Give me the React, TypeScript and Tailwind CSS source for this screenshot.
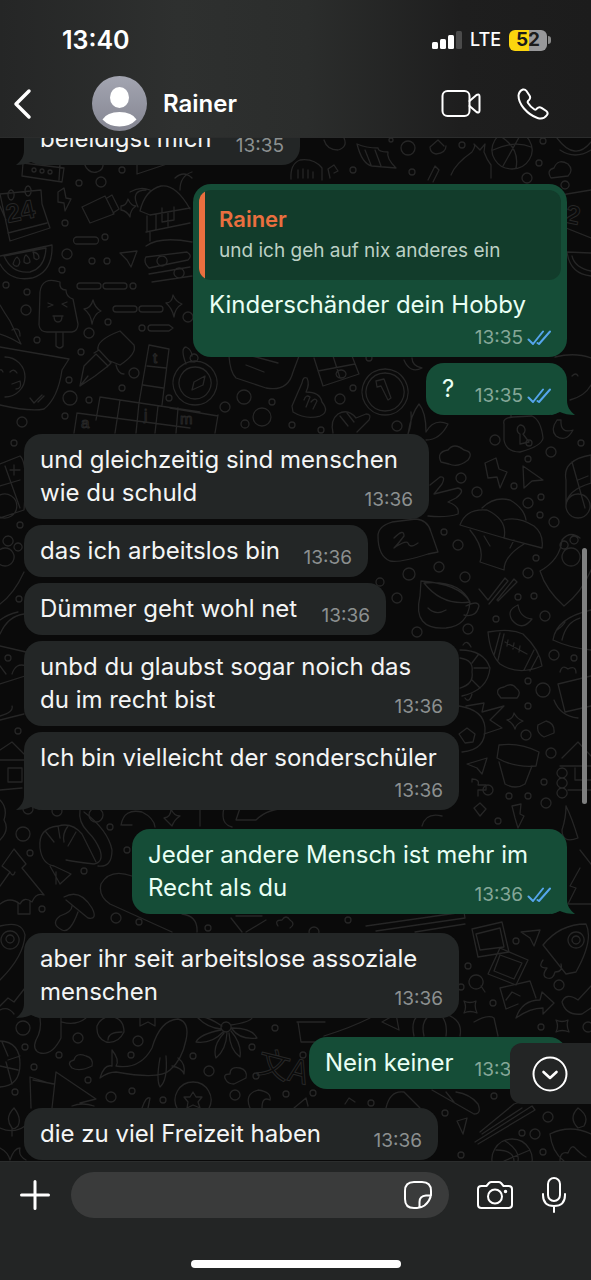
import { ReactNode } from "react";
import clsx from "clsx";

type Message = {
    text: string
    time: string
    mine?: boolean
    tail?: boolean
    stacked?: boolean
    quote?: { name: string, text: string }
    width: string
    gap: string
}

const messages: Message[] = [
    { text: "beleidigst mich", time: "13:35", tail: true, width: "w-[276px]", gap: "" },
    { text: "Kinderschänder dein Hobby", time: "13:35", mine: true, stacked: true, quote: { name: "Rainer", text: "und ich geh auf nix anderes ein" }, width: "w-[374px]", gap: "mt-[19px]" },
    { text: "?", time: "13:35", mine: true, tail: true, width: "w-[141px]", gap: "mt-[6px]" },
    { text: "und gleichzeitig sind menschen wie du schuld", time: "13:36", width: "w-[405px]", gap: "mt-[19px]" },
    { text: "das ich arbeitslos bin", time: "13:36", width: "w-[344px]", gap: "mt-[6px]" },
    { text: "Dümmer geht wohl net", time: "13:36", width: "w-[362px]", gap: "mt-[6px]" },
    { text: "unbd du glaubst sogar noich das du im recht bist", time: "13:36", width: "w-[435px]", gap: "mt-[6px]" },
    { text: "Ich bin vielleicht der sonderschüler", time: "13:36", tail: true, stacked: true, width: "w-[435px]", gap: "mt-[6px]" },
    { text: "Jeder andere Mensch ist mehr im Recht als du", time: "13:36", mine: true, tail: true, width: "w-[435px]", gap: "mt-[19px]" },
    { text: "aber ihr seit arbeitslose assoziale menschen", time: "13:36", tail: true, width: "w-[435px]", gap: "mt-[19px]" },
    { text: "Nein keiner", time: "13:36", mine: true, tail: true, width: "w-[258px]", gap: "mt-[19px]" },
    { text: "die zu viel Freizeit haben", time: "13:36", width: "w-[414px]", gap: "mt-[19px]" },
]

// x, y, r
const dots = [
    [79, 183, 3], [101, 182, 5], [122, 170, 3], [65, 223, 3], [67, 254, 5], [62, 270, 3], [105, 237, 3], [92, 261, 3], [107, 261, 3],
    [133, 286, 3], [6, 285, 3], [27, 292, 3], [26, 310, 5], [37, 340, 3], [89, 333, 5], [108, 322, 3], [81, 352, 3], [69, 380, 3],
    [70, 398, 7], [89, 400, 3], [65, 416, 3], [134, 373, 5], [122, 388, 3], [169, 398, 3], [142, 328, 3], [22, 422, 5], [14, 443, 3],
    [20, 525, 3], [19, 599, 3], [8, 658, 3], [18, 731, 3], [188, 317, 5], [225, 407, 5], [244, 397, 7], [272, 402, 3], [245, 424, 4],
    [262, 417, 9], [292, 425, 3], [321, 430, 3], [340, 399, 5], [353, 388, 3], [397, 426, 5], [369, 358, 3], [408, 148, 7], [391, 140, 2],
    [462, 145, 3], [527, 178, 5], [539, 163, 3], [543, 141, 3], [353, 170, 3], [412, 172, 3], [495, 440, 5], [529, 443, 3],
    [528, 459, 3], [551, 452, 5], [581, 443, 3], [461, 478, 5], [477, 492, 5], [514, 486, 3], [541, 497, 3], [540, 515, 3], [528, 503, 5],
    [554, 522, 5], [458, 545, 5], [444, 532, 3], [409, 574, 6], [439, 567, 5], [465, 577, 5], [397, 598, 5], [380, 582, 4], [536, 558, 3],
    [528, 573, 5], [518, 597, 3], [534, 596, 3], [545, 616, 5], [496, 619, 3], [468, 629, 5], [417, 632, 5], [554, 655, 5], [574, 658, 3],
    [528, 681, 3], [543, 690, 7], [528, 706, 3], [526, 735, 5], [551, 753, 5], [544, 782, 3], [488, 790, 5], [509, 796, 3], [528, 796, 3],
    [546, 803, 5], [498, 821, 3], [28, 809, 5], [57, 811, 5], [96, 815, 7], [110, 827, 3], [23, 834, 7], [30, 853, 3],
    [84, 871, 3], [42, 909, 3], [116, 918, 5], [139, 922, 3], [127, 850, 3], [208, 928, 3], [314, 932, 5], [348, 920, 3], [516, 941, 3],
    [468, 966, 3], [559, 985, 5], [493, 1003, 3], [461, 987, 3], [541, 1027, 3], [588, 1027, 5], [23, 1028, 7], [25, 1047, 3], [34, 1067, 3],
    [78, 1038, 5], [59, 1055, 3], [138, 1041, 5], [131, 1055, 3], [88, 1080, 3], [111, 1097, 5], [132, 1091, 3], [163, 1100, 3], [193, 1056, 3],
    [209, 1071, 5], [252, 1047, 3], [256, 1076, 3], [235, 1095, 5], [275, 1028, 3], [286, 1094, 3], [303, 1055, 3], [15, 1092, 3],
    [313, 1093, 3], [371, 1103, 3], [445, 1113, 3], [548, 1117, 5], [535, 1134, 5], [522, 1133, 3], [461, 1155, 3], [543, 1152, 3], [494, 1096, 3],
]

const doodles = [
    // row under the header
    "M23 163 L64 168 L62 182 L22 176 Z M60 164 L59 180", "M84 163 Q88 174 97 172 Q104 170 103 163 M137 163 V174 L170 163",
    "M324 140 Q327 150 338 150 Q348 147 344 138", "M357 144 Q362 164 372 166 L396 168 Q386 158 388 152 Q378 152 378 148 Q366 148 357 144 M365 150 L371 165 M375 150 L381 166",
    "M430 147 Q430 153 436 154 Q446 153 446 146 M430 147 L438 140 L444 146", "M451 175 Q455 164 472 152 Q476 146 474 144 L480 150 L485 144 L484 152 Q487 160 491 165 L491 178",
    "M512 131 a20 19 0 1 0 .1 0 M500 136 Q520 148 516 168 M493 150 Q515 140 531 147 M522 132 L503 166", "M557 138 Q575 162 591 142 M560 150 Q575 160 591 150",
    "M551 178 Q546 170 554 168 Q558 158 568 164 Q574 170 568 176 Z", "M291 179 Q290 164 300 160 Q314 158 322 168 V180 M298 178 v-8 M303 178 v-9 M308 178 v-8 M313 178 v-6",
    "M330 178 l-2 -9 l6 -4 l4 6 l-4 2 M428 180 l7 -14 l4 4 l-6 12",
    // calendar
    "M0 194 L41 190 L42 204 L50 228 L10 241 Z M8 233 L47 223 M0 206 L6 220 M11 190 a3 5 0 1 0 .1 0 M28 186 a3 5 0 1 0 .1 0",
    "M555 196 L591 190 M561 191 V226 L591 238 M565 181 a4 4 0 1 0 .1 0", "M58 192 L64 188 L66 198 L71 199 L65 211 L64 203 L58 202 Z",
    "M82 207 L105 196 L114 214 L90 223 Z M107 198 L112 195 L119 209 L113 213", "M121 206 Q126 206 128 199 Q131 206 136 206 Q130 210 130 217 Q127 211 121 210 Z",
    // beach hut
    "M140 211 Q145 190 161 186 Q176 184 190 209 M140 211 L150 215 L190 208 M147 216 V232 M156 214 V230 M168 212 V226 M146 232 L190 223 M150 241 V232 M146 246 Q160 236 192 242 M162 208 v14 l12 -2 v-13 M138 207 Q130 190 146 190 M130 192 Q140 186 150 190 M175 178 Q184 170 192 178 M180 190 Q180 176 192 172",
    "M77 237 h18 a3 3 0 0 1 0 7 h-18 a3 3 0 0 1 0 -7", "M0 256 L52 245 Q53 272 32 278 Q10 282 0 264 M4 256 L46 248 Q45 268 30 272 Q12 274 4 256 M13 264 q2 -6 4 -7 q5 4 1 9 q-3 1 -5 -2 M24 262 q0 -6 2 -7 q4 3 4 7 q-3 3 -6 0 M34 258 q0 -4 -1 -6 q6 1 6 6 q-2 3 -5 0",
    "M591 253 L567 252 Q570 274 591 276 M572 256 Q575 268 591 271", "M120 253 L137 251 L131 267 L127 260 Z",
    "M146 257 L187 252 Q193 256 188 260 L149 268 Q143 262 146 257 M149 274 L190 267 M152 282 L192 276 M162 256 a5 5 0 1 0 .1 0 M179 268 a5 5 0 1 0 .1 0",
    "M80 283 h18 a3 3 0 0 1 0 6 h-18 a3 3 0 0 1 0 -6 M106 283 h18 a3 3 0 0 1 0 6 h-18 a3 3 0 0 1 0 -6 M116 306 h18 a3 3 0 0 1 0 6 h-18 a3 3 0 0 1 0 -6 M142 306 h18 a3 3 0 0 1 0 6 h-18 a3 3 0 0 1 0 -6 M151 325 h18 l4 3 l-4 3 h-18 a3 3 0 0 1 0 -6",
    // ice cream
    "M39 325 L40 292 Q42 276 60 282 Q59 290 66 290 Q66 297 73 299 L78 324 Q78 331 72 332 L47 332 Q40 332 39 325 M56 332 V346 q4 4 7 0 V332 M48 303 l5 2 l-5 2 M67 302 l-5 2 l5 3 M53 316 h10 M54 316 q0 6 4 6 q4 0 4 -6",
    "M84 309 Q91 308 93 300 Q95 308 101 311 Q94 314 92 324 Q91 314 84 309 M166 303 Q172 303 173 295 Q176 302 182 304 Q175 308 174 317 Q172 308 166 303",
    "M0 305 Q4 312 10 321 Q18 338 21 344 Q10 337 0 334 M12 330 q8 -4 8 6",
    // pen
    "M80 386 L84 366 L96 354 L108 366 L95 376 Z M94 353 L99 350 L111 363 L107 367 M98 350 Q96 340 120 331 L134 345 Q137 354 120 365 L110 361 M116 365 Q118 374 124 374 M80 386 L88 376",
    "M0 347 L69 359 L62 370 Q58 398 44 409 Q30 412 0 405 M5 357 a20 20 0 1 1 0 40 M10 372 q4 -4 7 1 M3 372 q-2 -4 -4 -1 M12 384 l8 -3 q2 8 -4 8 M30 398 l4 5 l8 -8 M38 402 l6 -6",
    // crossword
    "M149 345 L169 349 L162 405 M149 345 L139 403 M147 366 L166 368 M143 385 L163 388 M100 397 L200 412 M96 420 L100 397 M77 413 L190 428 M77 413 L74 433 M120 400 L115 433 M139 403 L136 433 M158 406 L155 433 M178 408 L176 433 M218 415 L215 433 M170 408 L218 416",
    // compass
    "M195 361 a22 22 0 1 0 .1 0 M195 367 a16 16 0 1 0 .1 0 M194 354 a4 4 0 1 0 .1 0 M192 390 l2 -8 l11 -6 l-2 9 Z M186 364 Q180 348 186 347 Q192 350 192 356",
    "M229 356 Q230 372 236 378 L266 388 Q288 392 293 372 L299 356 M246 365 L264 372 M252 356 L278 363", "M292 406 Q298 392 302 383 Q303 376 307 378 Q310 384 306 392 Q320 392 322 402 Q330 412 320 416 Q306 420 293 412 Z M304 400 q2 -6 6 -3 l-4 10 M311 402 q4 -5 6 -1 l-4 8",
    "M314 358 L323 386 L359 374 L352 356 M318 371 L355 364 M333 356 L340 378 M341 370 a5 4 0 1 0 .1 0", "M385 369 a23 23 0 1 0 .1 0 M385 373 a19 19 0 1 0 .1 0 M376 381 L384 379 L391 398 L388 400 L381 386 L377 387 Z",
    "M333 433 Q330 420 338 414 Q348 408 356 418 L366 414 Q372 414 369 420 L357 432 M340 416 l8 10 M347 413 l7 9", "M408 434 Q411 414 419 404 Q426 412 426 432 M426 432 Q434 418 448 424 Q440 440 426 440 M408 434 Q412 425 411 412 M404 360 Q410 374 422 368 Q412 366 412 358",
    // right column
    "M555 357 Q575 352 591 358 M570 400 Q585 396 591 385 M572 376 q4 -4 6 0", "M504 424 Q502 418 513 417 L532 416 Q541 420 543 438 Q542 446 520 452 Q506 452 504 440 Z M511 416 v-8 M518 414 v-8 M525 414 v-6 M520 425 a5 5 0 0 1 3 9 l6 8 l-9 2 v-10 a5 5 0 0 1 0 -9",
    "M557 420 Q550 430 556 436 Q566 443 573 430 Q560 434 561 420 Z", "M441 462 Q436 452 448 450 Q454 442 464 450 Q474 452 468 460 Q458 468 449 464 Z", "M485 463 L496 458 L499 469 L507 472 L500 488 L497 477 L488 478 Z M523 466 L543 480 L532 481 L524 488 Z",
    "M430 485 L440 477 Q446 476 442 484 L434 494 L458 488 Q466 490 456 498 L448 502 Q460 506 458 514 Q446 518 428 516",
    "M460 525 Q466 508 487 510 Q508 520 504 538 Z M482 508 Q494 496 510 500 Q524 508 526 520 M504 520 Q518 516 534 526 Q544 534 542 548 L504 538 M470 530 Q485 548 480 562 L504 570 Q504 556 524 544 M484 536 l6 10 M514 540 l-4 8",
    "M378 536 Q378 526 392 522 L416 519 Q428 520 431 532 L438 552 L428 554 Q400 563 390 561 Q378 556 378 536 M394 538 q10 -10 10 -2 q-6 8 -10 12 q12 -8 14 -5 q2 6 10 0",
    "M479 589 L488 600 L505 578 L508 581 L489 604 M497 600 L514 579 L517 582 L498 601", "M421 581 Q460 584 470 602 Q468 626 446 628 Q412 630 420 596 Z M424 583 Q442 606 470 602 Q460 580 424 583 M466 606 Q478 600 479 606 Q476 618 464 615 M428 608 q8 8 18 2",
    "M518 605 Q506 610 512 620 Q522 632 532 619 Q520 618 518 605", "M488 632 Q510 628 523 634 Q540 650 542 666 Q518 676 500 664 Q490 654 488 632 M500 633 L494 655 M504 634 L498 660 M534 650 L524 670 M538 656 L530 671 M505 642 l22 12 M508 640 l-1 6 M514 643 l-1 6 M520 646 l-1 6",
    "M460 650 Q484 650 490 668 Q488 690 462 696 M460 658 Q474 660 472 672 Q474 684 460 688 M478 655 l-6 8 M488 668 h-14 M480 688 l-8 -8 M463 645 q4 -6 8 2 M465 698 q4 6 7 -4",
    "M498 694 Q496 688 504 687 Q512 682 516 688 Q522 692 517 698 H501 Z", "M459 706 Q484 710 485 728 Q486 750 462 752 M466 706 L484 703 L482 712 L504 706 L490 720 L502 728 L484 734 M459 734 l8 -6 l8 6 l-2 8 l-8 1 Z",
    "M507 720 Q513 719 514 713 Q517 719 523 721 Q516 724 515 729 Q513 723 507 720 M538 725 l8 -4 q9 2 8 12 l-10 4 q-8 -4 -6 -12",
    "M499 745 Q520 742 539 752 L536 766 Q515 768 497 758 Z M499 762 L505 784 Q516 790 525 784 L532 766", "M467 764 L487 758 L482 774 L477 768 Z M472 782 v-3 q8 0 6 6 l8 0 v5 l-8 0 v6",
    "M566 505 Q567 490 591 483 V455 Q562 460 566 480 Z M572 462 L585 508 M578 494 a12 12 0 1 0 .1 0 M578 480 l10 -4", "M540 571 Q560 560 562 540 Q570 530 580 538 M540 571 Q546 590 564 606 Q582 592 591 570 M571 548 a9 9 0 1 0 .1 0 M564 541 a4 4 0 1 0 .1 0 M574 536 a4 4 0 1 0 .1 0",
    "M553 640 Q556 618 591 610 M553 640 Q570 648 591 650 M562 640 Q566 622 580 618 M557 630 q6 -4 8 -8", "M558 684 L591 676 M558 684 L565 712 L591 706 M554 700 Q560 716 578 718 M560 672 q2 -8 8 -3 q8 -4 8 4",
    "M562 758 L578 742 L591 756 M560 766 H591 M575 768 V780 H591 M562 768 a5 5 0 1 0 .1 0 M562 778 a5 5 0 1 0 .1 0 M562 788 a5 5 0 1 0 .1 0 M568 790 H591",
    // left margin
    "M0 464 L20 456 Q28 462 24 510 L0 518 M5 466 L20 508 M0 495 a12 12 0 1 1 0 22 M10 470 h10 M14 465 v10 M0 486 L20 480", "M8 536 a5 5 0 1 0 .1 0 M18 543 a4 4 0 1 0 .1 0 M5 548 a9 9 0 1 0 .1 0 M24 572 Q14 594 0 604",
    "M0 646 L26 652 M0 634 Q8 616 24 614 M0 620 q8 -6 18 -8 M0 666 l6 8 M12 674 q4 -12 14 -8 M0 684 L25 676 M0 716 Q14 712 12 706 M0 720 L24 714 M0 750 L12 742 L24 754 M0 760 H25 M8 768 h14 v14 h-14 Z M0 790 L22 788 M0 800 q8 8 4 20 q6 10 -4 20",
    // shrimp, tree, mushroom
    "M80 810 Q78 822 88 832 Q96 840 100 850 Q104 862 94 864 Q76 862 66 860 M84 812 Q108 830 112 850 Q112 868 98 866", "M40 848 Q38 828 58 826 Q72 822 82 834 L96 862 M40 848 Q42 864 54 866 L71 874 L60 884 L50 866 M46 832 l8 10 M58 826 l2 12 M68 826 q-6 8 -4 16 M76 832 l-8 14 M56 872 v12",
    "M0 886 L10 872 L2 866 L14 849 L26 864 L22 868 L40 890 L44 895 Q36 892 32 902 Q24 896 20 904 Q10 896 0 904 M18 903 V914 H30 V901 M10 872 q3 6 5 0",
    "M64 897 Q80 888 92 908 Q98 920 88 918 L66 900 M72 906 Q72 912 60 916 Q50 924 62 930 Q70 934 78 912", "M121 825 Q124 808 142 812 Q154 818 155 827 M122 825 H132 M164 818 Q171 817 171 809 Q174 816 180 816 Q174 820 172 826 Z",
    "M132 876 Q110 868 101 884 Q98 896 110 904 L172 932 M197 932 Q198 916 182 914 M240 808 l-4 12 h20 M256 820 Q268 808 290 808 M200 810 V826 M224 808 Q220 824 232 827",
    "M0 980 Q24 956 25 935 Q22 920 0 926 M10 931 a9 9 0 1 0 .1 0 M10 935 a4 4 0 1 0 .1 0 M0 1006 l8 -8 l6 4 l11 -14 M0 1010 Q8 1006 14 1014", "M231 918 L242 932 M246 932 L266 920 M236 916 L262 916 M278 926 q-4 -6 4 -6 q4 -6 8 0 q6 4 0 8",
    "M366 926 L464 912 L465 918 L376 931 M415 932 l50 -8", "M472 929 L502 922 L509 952 L478 957 Z M476 934 L500 928 L504 947 L480 950 Z M500 948 L528 960 L516 985 L488 974 Z M500 955 L522 963 L514 979 L494 971 Z",
    "M521 932 L540 930 L534 946 L530 938 Z M543 945 Q560 924 586 924 Q594 940 576 972 L566 974 Z M576 932 a8 8 0 1 0 .1 0 M576 936 a4 4 0 1 0 .1 0 M543 960 q-6 8 4 8 q-6 8 0 10 q6 2 8 -6 q8 0 6 -8",
    "M476 975 a7 7 0 1 0 .1 0 M481 986 l4 6 M500 988 L530 981 L536 998 M500 988 L506 1009 L518 1004 M506 1000 l6 -8 l8 4 M516 1018 Q522 1000 540 1000 L542 992 L554 1003 L543 1014 V1008 Q530 1008 516 1018",
    "M464 1001 Q470 1004 476 1001 Q474 1007 477 1013 Q470 1010 464 1013 Q467 1007 464 1001 M556 1020 Q562 1023 568 1020 Q566 1026 569 1032 Q562 1029 556 1032 Q559 1026 556 1020", "M562 1002 Q566 992 578 1000 L591 986 M562 1002 Q566 1016 582 1014 L591 1008",
    // bottom
    "M414 1036 Q408 1010 436 1012 Q464 1016 460 1036 M424 1036 Q420 1020 432 1014 M446 1036 Q448 1022 440 1014 M474 1022 Q488 1014 494 1018 L498 1036 M382 1022 l14 -8 l3 16 Z M297 1022 h28 M298 1022 l3 20 h14 M324 1036 Q350 1028 370 1018",
    "M40 1018 Q42 1030 36 1040 Q32 1050 40 1053 Q52 1056 61 1038 V1018 M62 1022 q14 4 24 -4", "M97 1026 Q100 1018 110 1016 Q124 1018 124 1032 Q118 1044 106 1042 Q96 1038 97 1026 M108 1040 q0 -8 14 -8 M140 1014 v12 l8 -4 l7 4 v-10",
    "M100 1078 Q104 1064 112 1066 L112 1050 Q120 1060 116 1066 Q140 1070 152 1048 Q160 1020 178 1019 Q190 1022 186 1040 Q182 1060 170 1070 Q160 1080 116 1072 Q108 1072 100 1078 M160 1058 Q156 1080 160 1087 Q168 1080 166 1056 M172 1066 Q182 1068 184 1074 Q186 1064 178 1058",
    "M226 1022 a5 5 0 1 0 .1 0 M222 1026 Q204 1014 198 1018 Q208 1028 221 1029 M221 1030 Q200 1034 196 1042 Q212 1044 223 1032 M224 1033 Q212 1046 216 1058 Q226 1050 227 1033 M229 1033 Q230 1050 240 1057 Q242 1044 231 1031 M232 1029 Q240 1040 257 1038 Q252 1028 232 1028 M231 1025 Q250 1022 252 1018",
    "M72 1068 Q66 1062 74 1060 Q76 1052 86 1056 Q94 1058 92 1066 Q80 1072 72 1068 M226 1080 Q222 1074 230 1074 Q230 1066 240 1068 Q248 1070 246 1078 Q238 1082 234 1084 Q228 1084 226 1080", "M31 1108 L30 1077 L52 1084 M52 1108 L56 1072 L96 1099 L80 1103 M33 1080 L54 1084 M72 1106 q10 -4 22 0",
    "M0 1041 Q20 1042 20 1064 Q20 1086 0 1087 M8 1060 L20 1056 M8 1056 L2 1042 M6 1062 L12 1084 M0 1066 L18 1070", "M193 1082 a18 18 0 1 0 .1 0 M193 1092 l3 5 l6 0 l-4 5 l2 6 l-7 -3 l-6 3 l1 -6 l-4 -5 h6 Z",
    "M250 1108 Q244 1094 258 1090 Q272 1092 270 1100 q-8 -4 -8 8 M142 1108 Q146 1096 150 1098 L148 1108", "M12 1128 Q4 1118 14 1108 Q22 1118 18 1126 Q14 1130 12 1128 M12 1128 v8 M0 1128 Q14 1134 25 1126 M0 1148 q8 4 10 12 q4 -12 10 -12 q-2 8 6 12",
    "M386 1108 Q390 1090 404 1092 L420 1108 M432 1090 L474 1114 Q482 1114 478 1104 Q470 1094 456 1092 M446 1092 L454 1102 M294 1108 l12 -10 l2 8 M345 1104 l4 -6 l6 4", "M480 1132 L514 1104 L520 1102 M482 1134 L522 1108 M475 1142 L532 1106 L535 1110 L478 1144 M457 1121 L467 1118 L463 1134 Z",
    "M512 1139 a20 20 0 1 0 .1 0 M496 1150 Q514 1150 514 1161 M505 1141 Q520 1150 518 1161 M530 1150 L504 1161", "M550 1134 Q570 1124 591 1134 M550 1134 Q552 1152 564 1161 M578 1128 Q568 1118 578 1108 Q590 1116 584 1126 Z M560 1161 q0 -10 8 -8 q4 -10 8 -4 q6 6 10 8",
    // shapes peeking from behind the bubbles
    "M580 868 L570 886 L576 888 L568 904 H591 M580 850 L591 864 M566 806 Q572 818 578 838 Q562 844 562 830 Q566 818 566 806", "M512 806 L521 804 L520 814 L524 816 L518 828 L515 818 Z M474 808 l6 -5 l6 6 l-6 7 Z M422 826 Q426 812 442 816",
]

const Wallpaper = () => (
    <svg className="absolute inset-0 h-full w-full" viewBox="0 138 591 1023" preserveAspectRatio="xMidYMin slice" fill="none" stroke="#262626" strokeWidth="1.3" strokeLinejoin="round" strokeLinecap="round" aria-hidden="true">
        {dots.map(([x, y, r], i) => <circle key={i} cx={x} cy={y} r={r} />)}
        {doodles.map((d, i) => <path key={i} d={d} />)}
        <circle cx="34" cy="170" r="2" />
        <circle cx="42" cy="171" r="2" />
        <circle cx="50" cy="172" r="2" />
        <g className="font-[Liberation_Sans,sans-serif]" strokeWidth="1">
            <text x="8" y="223" fontSize="26" fontWeight="bold" transform="rotate(-12 8 223)">24</text>
            <text x="564" y="222" fontSize="26" fontWeight="bold" transform="rotate(12 564 222)">2</text>
            <text x="153" y="363" fontSize="15">t</text>
            <text x="144" y="420" fontSize="15">j</text>
            <text x="81" y="428" fontSize="15">a</text>
            <text x="180" y="424" fontSize="15">m</text>
        </g>
        <g className="font-[Noto_Sans_CJK_SC,sans-serif]" strokeWidth="1">
            <text x="258" y="1076" fontSize="32" transform="rotate(14 272 1064)">文A</text>
        </g>
    </svg>
)

const Icon = ({ children, className, box }: { children: ReactNode, className: string, box: string }) => (
    <svg className={className} viewBox={box} fill="none" stroke="currentColor" strokeWidth="2" strokeLinecap="round" strokeLinejoin="round" aria-hidden="true">
        {children}
    </svg>
)

const Ticks = () => (
    <svg className="h-4 w-6" viewBox="0 0 24 16" fill="none" stroke="#55a5ec" strokeWidth="2" strokeLinecap="round" strokeLinejoin="round" aria-label="Read">
        <path d="M1.500 9.500 L6 14 L16 1.500 M10.500 13 L12 14 L23 1.500" />
    </svg>
)

const Tail = ({ mine }: { mine?: boolean }) => (
    <svg className={clsx("absolute bottom-0 h-6 w-6", mine ? "-right-2 text-[#154d37]" : "-left-2 -scale-x-100 text-[#232626]")} viewBox="0 0 24 24" fill="currentColor" aria-hidden="true">
        <path d="M16 0 V9 C16 16 19 20 24 24 C18 24 13 23 9 21 L0 24 V0 Z" />
    </svg>
)

const Bubble = ({ message }: { message: Message }) => {
    const { text, time, mine, tail, stacked, quote, width, gap } = message
    return (
        <li className={clsx("relative shrink-0 rounded-[18px]", width, gap, mine ? "self-end bg-[#154d37] text-[#e9fff4]" : "self-start bg-[#232626] text-[#f4f5f5]")}>
            {tail && <Tail mine={mine} />}
            {quote && (
                <blockquote className="mx-[6px] -mb-px mt-[6px] flex h-[90px] overflow-hidden rounded-xl bg-[#123c2b]">
                    <div className="w-[6px] bg-[#ea6f3f]" />
                    <div className="flex flex-col justify-center pl-[14px]">
                        <cite className="text-[22px] leading-8 font-semibold text-[#ea6f3f] not-italic">{quote.name}</cite>
                        <p className="text-[19px] leading-8 text-[#bcd0c5]">{quote.text}</p>
                    </div>
                </blockquote>
            )}
            <div className="relative grid px-4 pt-[9px] pb-[10px]">
                <p className="col-start-1 row-start-1 text-[24px] leading-[33px]">{text}</p>
                <div className={clsx("col-start-1 flex items-center gap-1 self-end justify-self-end text-[19px] leading-[18px]", stacked ? "row-start-2 mt-2" : "row-start-1", mine ? "text-[#85a798]" : "text-[#8c9090]")}>
                    <time>{time}</time>
                    {mine && <Ticks />}
                </div>
            </div>
        </li>
    )
}

export default function App() {
    return (
        <div className="flex h-dvh flex-col bg-[#0a0a0a] font-[Inter,sans-serif] text-white">
            <header className="relative z-10 flex h-[138px] shrink-0 flex-col border-b border-[#2b2c2c] bg-[linear-gradient(90deg,#252626_0%,#2e302f_30%,#2b2d2c_52%,#1e1e1e_78%,#1c1c1c_100%)]">
                <div className="flex items-center justify-between pt-6 pr-10 pl-[62px]">
                    <span className="text-[25px] leading-8 font-semibold">13:40</span>
                    <div className="flex items-center">
                        <svg className="h-5 w-[30px]" viewBox="0 0 30 20" fill="currentColor" aria-label="Signal">
                            <rect x="0" y="12" width="6" height="7" rx="1.5" />
                            <rect x="8" y="9" width="6" height="10" rx="1.5" />
                            <rect x="16" y="5" width="6" height="14" rx="1.5" />
                            <rect x="24" y="1" width="6" height="18" rx="1.5" fill="#4b4b4b" />
                        </svg>
                        <span className="ml-2 text-[18px] leading-6 font-medium">LTE</span>
                        <span className="ml-2 flex h-[21px] w-[38px] items-center justify-center rounded-md bg-[linear-gradient(90deg,#fcd50e_52%,#98989a_52%)] text-[19px] leading-5 font-bold text-[#1b1b1b]">52</span>
                        <span className="ml-px h-2 w-[3px] rounded-r-full bg-[#8a8a8a]" />
                    </div>
                </div>
                <div className="flex grow items-center pt-[14px] pr-[42px] pl-3">
                    <button type="button" aria-label="Back">
                        <svg className="h-8 w-5" viewBox="0 0 20 32" fill="none" stroke="currentColor" strokeWidth="3.5" strokeLinecap="round" strokeLinejoin="round">
                            <path d="M17 3 L4 16 L17 29" />
                        </svg>
                    </button>
                    <svg className="ml-[60px] h-[55px] w-[55px]" viewBox="0 0 55 55" aria-hidden="true">
                        <defs>
                            <linearGradient id="avatar" x1="0" y1="0" x2="0" y2="1">
                                <stop offset="0" stopColor="#a3a5b1" />
                                <stop offset="1" stopColor="#858692" />
                            </linearGradient>
                        </defs>
                        <circle cx="27.5" cy="27.5" r="27.5" fill="url(#avatar)" />
                        <ellipse cx="27.5" cy="21.5" rx="9.5" ry="10.5" fill="#fff" />
                        <path d="M10.5 43.5 Q15 36 27.5 36 Q40 36 44.5 43.5 Q38 50.5 27.5 50.5 Q17 50.5 10.5 43.5 Z" fill="#fff" />
                    </svg>
                    <h1 className="ml-4 grow text-[24px] leading-8 font-semibold">Rainer</h1>
                    <button type="button" aria-label="Video call">
                        <Icon className="h-[27px] w-10" box="0 0 40 27">
                            <rect x="1.5" y="1" width="27" height="25" rx="5" />
                            <path d="M28.5 11 L35.5 5 Q38.5 3.5 38.5 6.5 V20.5 Q38.5 23.5 35.5 22 L28.5 16" />
                        </Icon>
                    </button>
                    <button type="button" aria-label="Call" className="ml-9">
                        <Icon className="h-8 w-8" box="0 0 32 32">
                            <path d="M6 1.5 Q8 1 9.5 3 L12.5 7.5 Q14 10 12 12 Q10 13.5 11 15 Q13.5 19 17.5 21.5 Q18.8 22.3 20 20.5 Q22 18.3 24.5 19.8 L29.3 23 Q31.5 24.8 30 27 Q26.5 32 20.5 30 Q13 27.5 7 20.5 Q1.5 14 1.5 7.5 Q2 3 6 1.5 Z" />
                        </Icon>
                    </button>
                </div>
            </header>

            <main className="relative min-h-0 grow overflow-hidden">
                <Wallpaper />
                <ul className="relative flex h-full flex-col justify-end px-6 pb-px">
                    {messages.map((message, i) => <Bubble key={i} message={message} />)}
                </ul>
                <div className="absolute right-1 bottom-[357px] h-64 w-[5px] rounded-full bg-[#7f8080]" />
                <button type="button" aria-label="Scroll to bottom" className="absolute right-0 bottom-[57px] flex h-[61px] w-[81px] items-center rounded-l-xl bg-[#232525] pl-[22px]">
                    <Icon className="h-9 w-9" box="0 0 36 36">
                        <circle cx="18" cy="18" r="16.5" />
                        <path d="M11.5 16 L18 22 L24.5 16" strokeWidth="2.6" />
                    </Icon>
                </button>
            </main>

            <footer className="flex h-[119px] shrink-0 flex-col items-center justify-between border-t border-[#2b2d2d] bg-[#232525] pt-[10px] pb-3">
                <div className="flex w-full items-center pr-6 pl-5">
                    <button type="button" aria-label="Attach">
                        <svg className="h-[30px] w-[30px]" viewBox="0 0 30 30" fill="none" stroke="currentColor" strokeWidth="3" strokeLinecap="round">
                            <path d="M15 1.5 V28.5 M1.5 15 H28.5" />
                        </svg>
                    </button>
                    <div className="ml-[21px] flex h-[46px] min-w-0 grow items-center rounded-full bg-[#3a3b3b] pr-[17px] pl-5">
                        <input type="text" aria-label="Message" className="min-w-0 grow bg-transparent text-[24px] outline-none" />
                        <button type="button" aria-label="Stickers">
                            <Icon className="h-7 w-7" box="0 0 28 28">
                                <path d="M10 1 H18 Q27 1 27 10 V14 Q26 20 20.5 24.5 Q17 27 13 27 H10 Q1 27 1 18 V10 Q1 1 10 1 Z M27 14.5 H22 Q15.5 15 15.5 21 V26.5" />
                            </Icon>
                        </button>
                    </div>
                    <button type="button" aria-label="Camera" className="ml-7">
                        <Icon className="h-7 w-9" box="0 0 36 28">
                            <path d="M4.5 5 H9.5 L12 2 Q13 1 14.5 1 H21.5 Q23 1 24 2 L26.5 5 H31.5 Q35 5 35 8 V24 Q35 27 31.5 27 H4.5 Q1 27 1 24 V8 Q1 5 4.5 5 Z" />
                            <circle cx="18" cy="15.5" r="7" />
                            <circle cx="28.5" cy="10.5" r="1" fill="currentColor" strokeWidth="1.5" />
                        </Icon>
                    </button>
                    <button type="button" aria-label="Record voice message" className="ml-7">
                        <Icon className="h-9 w-[26px]" box="0 0 26 36">
                            <rect x="7" y="1" width="12" height="23" rx="6" />
                            <path d="M2 17 V18 Q2 29 13 29 Q24 29 24 18 V17 M13 29 V35" />
                        </Icon>
                    </button>
                </div>
                <div className="h-2 w-[210px] rounded-full bg-white" />
            </footer>
        </div>
    )
}
